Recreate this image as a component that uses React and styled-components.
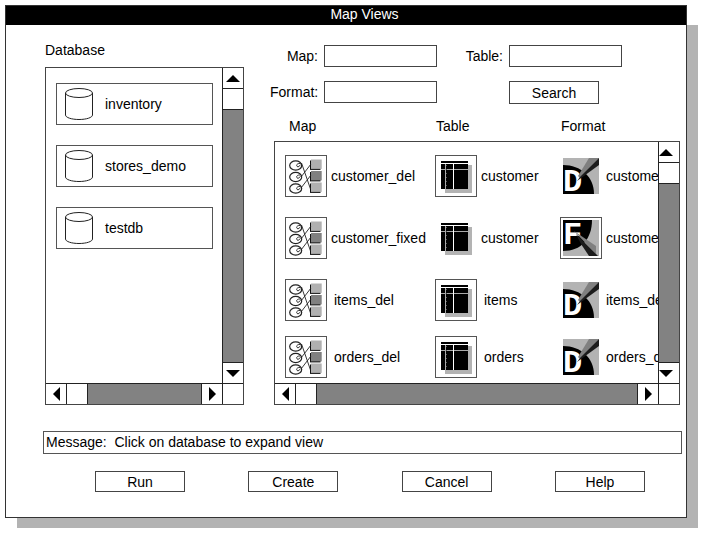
import React from "react";
import styled, { createGlobalStyle } from "styled-components";

const databases = ["inventory", "stores_demo", "testdb"];

const views = [
  { map: "customer_del", table: "customer", format: "customer_del", kind: "D", tableFrame: true, gap: 4 },
  { map: "customer_fixed", table: "customer", format: "customer_fixed", kind: "F", formatFrame: true, gap: 4 },
  { map: "items_del", table: "items", format: "items_del", kind: "D", tableFrame: true, gap: 7 },
  { map: "orders_del", table: "orders", format: "orders_del", kind: "D", tableFrame: true, gap: 7 },
];

const actions = ["Run", "Create", "Cancel", "Help"];

const arrows = {
  up: { w: 14, h: 7, points: "7,0 14,7 0,7" },
  down: { w: 14, h: 7, points: "0,0 14,0 7,7" },
  left: { w: 7, h: 14, points: "7,0 7,14 0,7" },
  right: { w: 7, h: 14, points: "0,0 7,7 0,14" },
};

const Arrow = ({ dir }) => {
  const { w, h, points } = arrows[dir];
  return (
    <svg width={w} height={h} viewBox={`0 0 ${w} ${h}`}>
      <polygon points={points} />
    </svg>
  );
};

const CylinderIcon = () => (
  <svg width="28" height="32" viewBox="0 0 28 32" fill="none" stroke="#222">
    <ellipse cx="14" cy="5" rx="13.5" ry="4.5" />
    <path d="M.5 5V27C.5 29.5 6.5 31.5 14 31.5S27.5 29.5 27.5 27V5" />
  </svg>
);

const MapIcon = () => (
  <svg width="40" height="40" viewBox="1 1 40 40">
    {[10.5, 22, 33.5].map((y, i) => (
      <g key={y}>
        <g fill="none" stroke="#222">
          <ellipse cx="10.7" cy={y} rx="6" ry="4.6" strokeWidth="1.2" />
          <path d={`M15.5 ${y - 2}C11.5 ${y - 2.5} 10.5 ${y + 0.5} 13 ${y + 1.5}l2.5-2`} strokeWidth="0.9" />
        </g>
        <path d={`M25 ${y - 5}h10.5v9.4h-10.5z`} fill="#111" />
        <path d={`M26 ${y - 6}h10.7v9.4h-10.7z`} fill={i === 1 ? "#808080" : "#b0b0b0"} />
      </g>
    ))}
    <path
      d="M16.5 8L25.5 34M16 22L26 9M16 33L26 20"
      fill="none"
      stroke="#222"
      strokeWidth="0.9"
    />
  </svg>
);

const TableIcon = () => (
  <svg width="40" height="40" viewBox="1 1 40 40">
    <path d="M10 10h27v28H10z" fill="#b3b3b3" />
    <path d="M6 6h27v28H6z" />
    <path d="M6 8.5H33" stroke="#fff" />
    <path d="M6 14.5H33M10.5 9V34" stroke="#aaa" />
    <path d="M11.5 10V33" stroke="#555" strokeDasharray="1 3" />
    <path d="M18.5 9V34" stroke="#fff" />
  </svg>
);

const FormatIcon = ({ kind }) => (
  <svg width="36" height="36" viewBox="0 0 36 36">
    <path d="M0 0h36v36H0z" fill="#b3b3b3" />
    {kind === "D" ? (
      <>
        <path d="M0 7C18 7 31 19 31 36H0z" />
        <Letter x="0" y="33">D</Letter>
        <path d="M15 18L26 0H36L17 20z" fill="#808080" />
        <path d="M36 0V7L14 23L17 19z" fill="#1c1c1c" />
      </>
    ) : (
      <>
        <path d="M0 0H29C29 19 18 31 0 31z" />
        <Letter x="0" y="24">F</Letter>
        <path d="M11 11L33 26V34z" fill="#808080" />
        <path d="M13 14L35 36H26L18 24z" fill="#1c1c1c" />
      </>
    )}
  </svg>
);

const ScrollPanel = ({ name, arrowAlign, children }) => (
  <StPanel>
    <StViewport>{children}</StViewport>
    <StVerticalBar>
      <StArrow type="button" aria-label={`Scroll ${name} up`} $align={arrowAlign}>
        <Arrow dir="up" />
      </StArrow>
      <StThumb />
      <StTrack />
      <StArrow type="button" aria-label={`Scroll ${name} down`} $align={arrowAlign}>
        <Arrow dir="down" />
      </StArrow>
    </StVerticalBar>
    <StHorizontalBar>
      <StArrow type="button" aria-label={`Scroll ${name} left`}>
        <Arrow dir="left" />
      </StArrow>
      <StThumb />
      <StTrack />
      <StArrow type="button" aria-label={`Scroll ${name} right`}>
        <Arrow dir="right" />
      </StArrow>
    </StHorizontalBar>
    <StCorner />
  </StPanel>
);

const App = () => {
  return (
    <>
      <GlobalStyle />
      <StWindow>
        <StTitle>Map Views</StTitle>
        <StBody>
          <StDatabases>
            <StHeading>Database</StHeading>
            <ScrollPanel name="databases">
              <StDatabaseList>
                {databases.map((db) => (
                  <li key={db}>
                    <StDatabase type="button">
                      <CylinderIcon />
                      {db}
                    </StDatabase>
                  </li>
                ))}
              </StDatabaseList>
            </ScrollPanel>
          </StDatabases>
          <StViews>
            <StSearch onSubmit={(e) => e.preventDefault()}>
              <label htmlFor="map">Map:</label>
              <StInput id="map" />
              <label htmlFor="table">Table:</label>
              <StInput id="table" />
              <label htmlFor="format">Format:</label>
              <StInput id="format" />
              <StSearchButton type="submit">Search</StSearchButton>
            </StSearch>
            <StColumns>
              <span>Map</span>
              <span>Table</span>
              <span>Format</span>
            </StColumns>
            <StResults>
              <ScrollPanel name="views" arrowAlign="flex-start">
                <StTable>
                  <tbody>
                    {views.map((v) => (
                      <tr key={v.map}>
                        <td>
                          <StEntry $gap={v.gap}>
                            <StFrame $visible><MapIcon /></StFrame>
                            {v.map}
                          </StEntry>
                        </td>
                        <td>
                          <StEntry $gap={v.gap}>
                            <StFrame $visible={v.tableFrame}><TableIcon /></StFrame>
                            {v.table}
                          </StEntry>
                        </td>
                        <td>
                          <StEntry $gap={4}>
                            <StFrame $visible={v.formatFrame}><FormatIcon kind={v.kind} /></StFrame>
                            {v.format}
                          </StEntry>
                        </td>
                      </tr>
                    ))}
                  </tbody>
                </StTable>
              </ScrollPanel>
            </StResults>
          </StViews>
        </StBody>
        <StMessage>{"Message:  Click on database to expand view"}</StMessage>
        <StActions>
          {actions.map((a) => (
            <StButton key={a} type="button">{a}</StButton>
          ))}
        </StActions>
      </StWindow>
    </>
  );
};

export default App;

const GlobalStyle = createGlobalStyle`
  * {
    box-sizing: border-box;
  }
  body {
    margin: 0;
    background: #fff;
    color: #000;
  }
  body, button, input {
    font: 14px/16px "Liberation Sans", Arial, sans-serif;
  }
  svg {
    display: block;
    flex: none;
  }
`;

const Letter = styled.text`
  font: bold 32px "Liberation Mono", monospace;
  fill: #fff;
`;

const StWindow = styled.main`
  position: relative;
  margin: 5px 17px 16px 5px;
  border: 1px solid #333;

  &::before {
    content: "";
    position: absolute;
    z-index: -2;
    top: 19px;
    left: 11px;
    right: -12px;
    bottom: -11px;
    background: #b3b3b3;
  }
  &::after {
    content: "";
    position: absolute;
    z-index: -1;
    inset: 0;
    background: #fff;
  }
`;
const StTitle = styled.h1`
  margin: 0;
  padding: 0 0 3px 37px;
  background: #000;
  color: #fff;
  font-size: 14px;
  font-weight: normal;
  text-align: center;
`;
const StBody = styled.div`
  display: flex;
  gap: 26px;
  padding: 17px 6px 0 39px;
`;
const StDatabases = styled.section`
  display: flex;
  flex-direction: column;
  flex: 0 0 199px;
`;
const StHeading = styled.h2`
  margin: 0 0 9px;
  font-size: 14px;
  font-weight: normal;
`;
const StViews = styled.section`
  flex: 1;
  min-width: 0;
`;
const StSearch = styled.form`
  display: grid;
  grid-template-columns: 48px 113px 60px 113px;
  gap: 14px 6px;
  align-items: start;
  margin-top: 3px;

  label {
    padding-top: 3px;
    text-align: right;
  }
`;
const StInput = styled.input`
  width: 100%;
  height: 22px;
  padding: 0 4px;
  border: 1px solid #444;
  border-radius: 0;
  background: #fff;
`;
const StButton = styled.button`
  width: 90px;
  height: 21px;
  padding: 0;
  border: 1px solid #444;
  background: #fff;
  color: #000;
`;
const StSearchButton = styled(StButton)`
  grid-column: 4;
  height: 23px;
`;
const StColumns = styled.div`
  display: grid;
  grid-template-columns: 147px 125px 1fr;
  padding: 14px 0 7px 19px;
`;
const StResults = styled.div`
  margin-left: 4px;
`;

const StPanel = styled.div`
  display: grid;
  grid-template-columns: minmax(0, 1fr) 21px;
  grid-template-rows: 1fr 21px;
  flex: 1;
  border: 1px solid #444;
`;
const StViewport = styled.div`
  overflow: hidden;
`;
const StArrow = styled.button`
  display: flex;
  flex: 0 0 20px;
  align-items: center;
  justify-content: ${(p) => p.$align || "center"};
  padding: 0;
  border: 0;
  background: #fff;
`;
const StThumb = styled.div`
  flex: 0 0 21px;
  background: #fff;
`;
const StTrack = styled.div`
  flex: 1;
  background: #828282;
`;
const StVerticalBar = styled.div`
  display: flex;
  flex-direction: column;
  border-left: 1px solid #222;

  > * + * {
    border-top: 1px solid #222;
  }
  > :last-child {
    flex-basis: 21px;
  }
`;
const StHorizontalBar = styled.div`
  display: flex;
  border-top: 1px solid #222;

  > * + * {
    border-left: 1px solid #222;
  }
  > :last-child {
    flex-basis: 21px;
  }
`;
const StCorner = styled.div`
  border-top: 1px solid #222;
  border-left: 1px solid #222;
`;

const StDatabaseList = styled.ul`
  display: flex;
  flex-direction: column;
  gap: 20px;
  margin: 0;
  padding: 15px 9px 0 10px;
  list-style: none;
`;
const StDatabase = styled.button`
  display: flex;
  align-items: center;
  gap: 12px;
  width: 100%;
  height: 42px;
  padding: 0 8px;
  border: 1px solid #555;
  background: #fff;
  color: #000;
`;

const StTable = styled.table`
  table-layout: fixed;
  width: 425px;
  margin: 3px 0 0 10px;
  border-collapse: collapse;
  white-space: nowrap;

  td {
    width: 150px;
    height: 62px;
    padding: 0;
    vertical-align: middle;
  }
  td:nth-child(2) {
    width: 125px;
  }
  tr:last-child td {
    height: 52px;
  }
`;
const StEntry = styled.div`
  display: flex;
  align-items: center;
  gap: ${(p) => p.$gap}px;
`;
const StFrame = styled.span`
  display: flex;
  flex: none;
  align-items: center;
  justify-content: center;
  width: 42px;
  height: 42px;
  border: 1px solid ${(p) => (p.$visible ? "#555" : "transparent")};
`;

const StMessage = styled.p`
  margin: 26px 4px 0 37px;
  padding: 2px 2px 3px;
  border: 1px solid #555;
  white-space: pre-wrap;
`;
const StActions = styled.div`
  display: flex;
  justify-content: space-between;
  padding: 17px 41px 25px 89px;
`;
